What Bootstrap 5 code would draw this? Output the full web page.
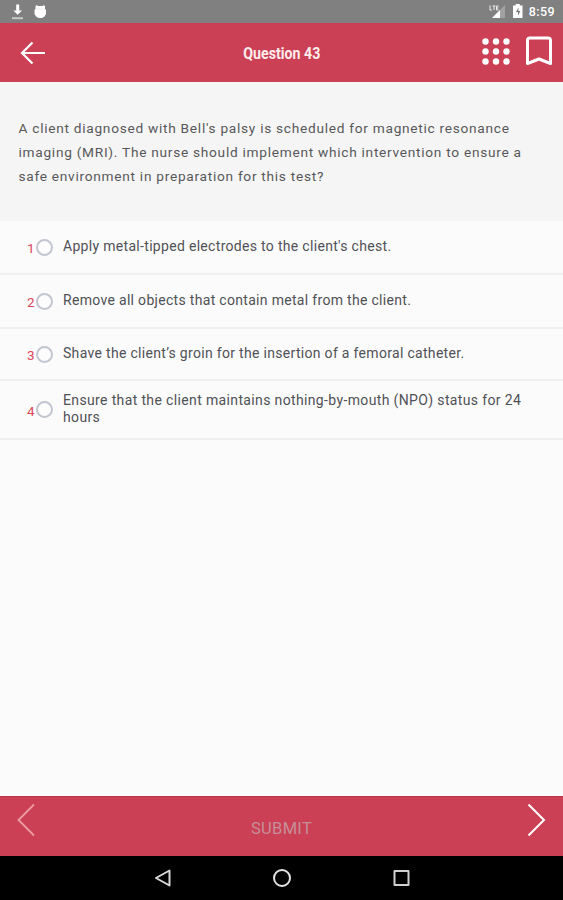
<!DOCTYPE html>
<html lang="en">
<head>
<meta charset="utf-8">
<meta name="viewport" content="width=device-width, initial-scale=1">
<title>Question 43</title>
<link href="https://cdn.jsdelivr.net/npm/bootstrap@5.3.0/dist/css/bootstrap.min.css" rel="stylesheet">
<style>
body{font-family:Roboto,"Liberation Sans",sans-serif;background:#fbfbfb;color:#505156}
svg{display:block;flex:none}
.screen{height:900px}
.status{height:23px;background:#808080;padding:0 8px 0 11px}
.clock{font-size:12.5px;line-height:23px;font-weight:500;letter-spacing:.4px;margin-left:6px}
.appbar{height:59px;background:#cb4055;padding:0 10px 0 20px}
.appbar-title{font-size:16.5px;line-height:20px;font-weight:700;transform:scaleX(.86);color:#ffeceb;padding-top:2px}
.side{width:80px}
.side-end{width:90px}
.question{height:139px;background:#f5f5f5;padding:34px 0 0 18.500px;font-size:13.700px;line-height:24px;letter-spacing:.72px;color:#58585a}
.answer,.answer:last-child{border:0;border-bottom:2px solid #efeff0!important;padding:0 20px 0 27px;background:#fbfbfb;color:#505156}
.num{width:9px;font-size:13.500px;line-height:18px;color:#dc4459;padding-top:2px}
.ring{width:17px;height:17px;border:2px solid #c3c6d1;background:#fdfdfd;flex:none}
.label-text{font-size:14px;line-height:17px;letter-spacing:.31px;margin-left:10px}
.h1r{height:54px}.h2r{height:54px}.h3r{height:52px}.h4r{height:59px}
.lift{padding-bottom:2px}
.raise{padding-bottom:1px;letter-spacing:.36px}
.bottombar{height:60px;background:#cb4055;padding:0 17px;border-top:1px solid #bd2f49}
.submit{font-size:16.500px;line-height:20px;color:#c68f98;padding-top:22px;letter-spacing:.3px}
.sysnav{height:44px;background:#000;padding:0 152px}
</style>
<script src="https://cdn.jsdelivr.net/npm/bootstrap@5.3.0/dist/js/bootstrap.bundle.min.js" defer></script>
</head>
<body>
<div class="screen d-flex flex-column overflow-hidden">
  <div class="status d-flex align-items-center text-white">
    <svg width="13" height="23" viewBox="0 0 13 23"><path d="M5.2 4.5h3v6H11L6.7 14.8 2.4 10.500h2.800z" fill="#fff"/><path d="M1 18.200h11" stroke="#c9c9c9" stroke-width="2"/></svg>
    <svg width="14" height="23" viewBox="0 0 14 23" style="margin-left:9px"><path d="M2.500 9V6.500L3.500 5l1.500 1h4.500L11 5l1 1.500V9l1 1v4l-1.500 2.500-2.500 1.500H5.500L3 16.500 1.500 14v-4z" fill="#fff"/><path d="M3 9h9" stroke="#e5e5e5" stroke-width=".7"/></svg>
    <div class="ms-auto d-flex align-items-center">
      <svg width="17" height="23" viewBox="0 0 17 23"><path d="M16 5v13H3z" fill="#a2a2a2"/><path d="M11 10v8H3z" fill="#fff"/><path d="M1 5.500v4.500h2M3.500 6h3m-1.500 0v4M9.500 6H7.500v4h2M7.500 8h2" stroke="#eee" fill="none"/></svg>
      <svg width="10" height="23" viewBox="0 0 10 23" style="margin-left:7px"><path d="M0 5.500h2.700V4h4.100v1.500H9.500V18H0z" fill="#fff"/><path d="M5.500 7.500 3 12h2v3.500L7.400 11h-2z" fill="#777"/></svg>
      <span class="clock">8:59</span>
    </div>
  </div>
  <header class="appbar d-flex align-items-center justify-content-between">
    <div class="side"><svg width="26" height="26" viewBox="0 0 26 26" fill="none" stroke="#fff" stroke-width="2.200"><path d="M25 13H2.500M12.500 2.500 2 13l10.500 10.500"/></svg></div>
    <h1 class="appbar-title m-0">Question 43</h1>
    <div class="side-end d-flex justify-content-end align-items-center">
      <svg width="30" height="36" viewBox="0 0 30 36" fill="#fff"><circle cx="4.500" cy="6.500" r="3.200"/><circle cx="15" cy="6.500" r="3.200"/><circle cx="25.500" cy="6.500" r="3.200"/><circle cx="4.500" cy="16.500" r="3.200"/><circle cx="15" cy="16.500" r="3.200"/><circle cx="25.500" cy="16.500" r="3.200"/><circle cx="4.500" cy="26.500" r="3.200"/><circle cx="15" cy="26.500" r="3.200"/><circle cx="25.500" cy="26.500" r="3.200"/></svg>
      <svg width="28" height="36" viewBox="0 0 28 36" style="margin-left:14px" fill="none" stroke="#fff" stroke-width="3" stroke-linejoin="round"><path d="M2.500 28.500V5.500q0-2.500 2.500-2.500h18q2.500 0 2.500 2.500v23L14 24z"/></svg>
    </div>
  </header>
  <main class="flex-grow-1">
    <p class="question m-0">A client diagnosed with Bell's palsy is scheduled for magnetic resonance<br>imaging (MRI). The nurse should implement which intervention to ensure a<br>safe environment in preparation for this test?</p>
    <div class="list-group list-group-flush">
      <label class="list-group-item answer h1r d-flex align-items-center"><span class="num">1</span><span class="ring rounded-circle"></span><span class="label-text lift">Apply metal-tipped electrodes to the client's chest.</span></label>
      <label class="list-group-item answer h2r d-flex align-items-center"><span class="num">2</span><span class="ring rounded-circle"></span><span class="label-text lift">Remove all objects that contain metal from the client.</span></label>
      <label class="list-group-item answer h3r d-flex align-items-center"><span class="num">3</span><span class="ring rounded-circle"></span><span class="label-text lift">Shave the client’s groin for the insertion of a femoral catheter.</span></label>
      <label class="list-group-item answer h4r d-flex align-items-center"><span class="num">4</span><span class="ring rounded-circle"></span><span class="label-text raise">Ensure that the client maintains nothing-by-mouth (NPO) status for 24<br>hours</span></label>
    </div>
  </main>
  <footer class="bottombar d-flex justify-content-between">
    <svg width="19" height="48" viewBox="0 0 19 48" fill="none" stroke="#ee9ca3" stroke-width="1.800"><path d="M17 7.500 1.500 23 17 38.500"/></svg>
    <span class="submit">SUBMIT</span>
    <svg width="19" height="48" viewBox="0 0 19 48" fill="none" stroke="#fff" stroke-width="2"><path d="M1.500 7.500 17 23 1.500 38.500"/></svg>
  </footer>
  <nav class="sysnav d-flex align-items-center justify-content-between">
    <svg width="20" height="20" viewBox="0 0 20 20" fill="none" stroke="#d8d8d8" stroke-width="2" stroke-linejoin="round"><path d="M17.500 2.500v15L4 10z"/></svg>
    <svg width="20" height="20" viewBox="0 0 20 20" fill="none" stroke="#e4e4e4" stroke-width="2"><circle cx="10" cy="10" r="8"/></svg>
    <svg width="20" height="20" viewBox="0 0 20 20" fill="none" stroke="#d0d0d0" stroke-width="2" stroke-linejoin="round"><path d="M3.500 3h14v14h-14z"/></svg>
  </nav>
</div>
</body>
</html>
